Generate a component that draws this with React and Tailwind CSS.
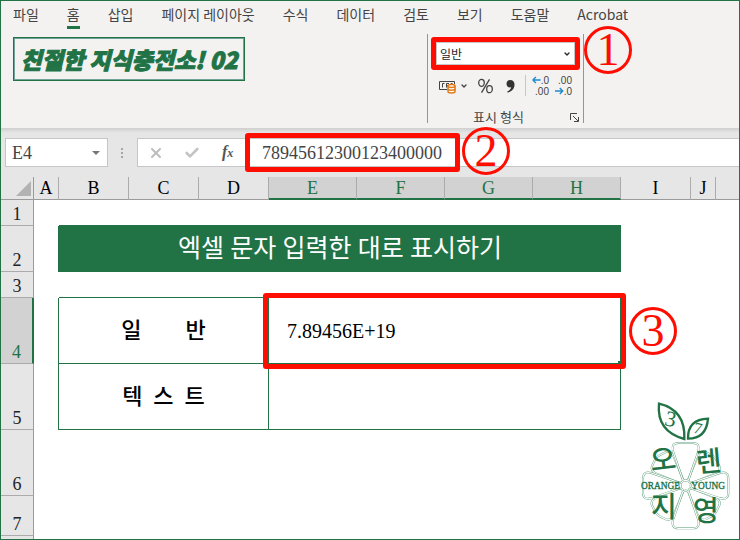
import React from 'react';
import { Check, ChevronDown, X } from 'lucide-react';

const tabs = ['파일', '홈', '삽입', '페이지 레이아웃', '수식', '데이터', '검토', '보기', '도움말', 'Acrobat'];

const columns = [
    { name: 'A' },
    { name: 'B' },
    { name: 'C' },
    { name: 'D' },
    { name: 'E', active: true },
    { name: 'F', active: true },
    { name: 'G', active: true },
    { name: 'H', active: true },
    { name: 'I' },
    { name: 'J' },
];

function Frame({ className }) {
    return <div className={`pointer-events-none absolute rounded-[3px] border-5 border-[#ff0d00] ${className}`} />;
}

function Marker({ number, className }) {
    return (
        <div
            className={`absolute z-10 flex size-12 items-center justify-center rounded-full border-3 border-[#ff0d00] font-['Liberation_Serif',serif] text-[46px] leading-none text-[#ff0d00] ${className}`}
        >
            {number}
        </div>
    );
}

function Tabs() {
    return (
        <nav className="flex h-7 gap-7 pl-3 text-sm text-[#444444]">
            {tabs.map((tab) => (
                <a
                    key={tab}
                    href="#"
                    className={`flex items-center whitespace-nowrap border-b-3 ${tab === '홈' ? 'border-[#217346]' : 'border-transparent'}`}
                >
                    {tab}
                </a>
            ))}
        </nav>
    );
}

function CurrencyIcon() {
    return (
        <svg width="17" height="16" viewBox="0 0 17 16" fill="none">
            <path d="M8 11.5H.5v-8h15V6" stroke="#444" />
            <path d="M5.500 5.500h-2v4M7.500 9.500v-4H10M7.500 7.500H9M12 7.500v-2h1.500" stroke="#444" />
            <path d="M9 8v5.500c0 2 7 2 7 0V8" fill="#fff" stroke="#e07b1a" strokeWidth="1.500" />
            <ellipse cx="12.500" cy="8" rx="3.500" ry="1.500" fill="#fff" stroke="#e07b1a" strokeWidth="1.500" />
            <path d="M9 10.800c0 2 7 2 7 0" stroke="#e07b1a" strokeWidth="1.500" />
        </svg>
    );
}

function DecimalArrow({ d }) {
    return (
        <svg width="9" height="8" viewBox="0 0 9 8" fill="none" stroke="#1e8bcd" strokeWidth="1.500">
            <path d={d} />
        </svg>
    );
}

function DecimalIcon({ increase }) {
    return (
        <span className="flex w-[17px] flex-col font-['Liberation_Sans',sans-serif] text-[10px] leading-[11px] text-[#444444]">
            <span className="flex items-center justify-between">
                {increase && <DecimalArrow d="M9 4H1M4 1L1 4l3 3" />}
                <span className="ml-auto">{increase ? '.0' : '.00'}</span>
            </span>
            <span className="flex items-center justify-between">
                {!increase && <DecimalArrow d="M0 4h8M5 1l3 3-3 3" />}
                <span className="ml-auto">{increase ? '.00' : '.0'}</span>
            </span>
        </span>
    );
}

function NumberGroup() {
    return (
        <section className="ml-[182px] flex h-[89px] w-[157px] flex-col border-x border-[#979593] px-2 pt-2">
            <div className="relative">
                <select
                    aria-label="표시 형식"
                    className="block h-[23px] w-full appearance-none border border-[#c8c6c4] bg-white pl-[3px] text-xs text-[#262626]"
                >
                    <option>일반</option>
                </select>
                <ChevronDown className="pointer-events-none absolute right-1 top-2 size-2 text-[#262626]" strokeWidth={4} />
                <Frame className="-inset-[5px]" />
                <Marker number="1" className="-top-4 left-[148px]" />
            </div>
            <div className="mt-[10px] flex h-[21px] items-center">
                <button aria-label="회계 표시 형식" className="ml-[3px] flex items-center gap-1">
                    <CurrencyIcon />
                    <ChevronDown className="size-2 text-[#444444]" strokeWidth={4} />
                </button>
                <button aria-label="백분율" className="ml-[9px]">
                    <svg width="17" height="16" viewBox="0 0 17 16" fill="none" stroke="#444" strokeWidth="1.300">
                        <ellipse cx="4.500" cy="4.800" rx="2.800" ry="3.500" />
                        <ellipse cx="12.500" cy="11.200" rx="2.800" ry="3.500" />
                        <path d="M12.500 1.300L4.500 14.700" />
                    </svg>
                </button>
                <button aria-label="쉼표" className="ml-3">
                    <svg width="9" height="14" viewBox="0 0 9 14" fill="#333">
                        <path d="M4 1c3 0 4.500 2 4.500 4.500 0 4-2.500 7-7 8l-.3-1c2.500-1 3.800-2.500 4-4.200C2.500 9 .5 7.200.5 4.700.5 2.500 2 1 4 1z" />
                    </svg>
                </button>
                <div className="ml-[10px] h-full border-l border-[#c8c6c4]" />
                <button aria-label="자릿수 늘림" className="ml-[6px]">
                    <DecimalIcon increase />
                </button>
                <button aria-label="자릿수 줄임" className="ml-[6px]">
                    <DecimalIcon />
                </button>
            </div>
            <div className="relative mt-auto text-center text-[13px] leading-3 text-[#444444]">
                <span className="pr-[14px]">표시 형식</span>
                <button aria-label="표시 형식 설정" className="absolute -right-1 top-[2px]">
                    <svg width="9" height="9" viewBox="0 0 9 9" fill="none" stroke="#444">
                        <path d="M.5 7V.5H7M3 3l5 5M8.500 4v4.500H4" />
                    </svg>
                </button>
            </div>
        </section>
    );
}

function Ribbon() {
    return (
        <header className="h-[127px] bg-[#f3f2f1]">
            <Tabs />
            <div className="flex items-start pl-3 pt-[5px]">
                <h1 className="mt-[3px] flex h-[44px] w-[232px] shrink-0 items-center justify-center whitespace-nowrap border border-[#217346] text-[23px] font-black italic text-[#217346] outline-1 -outline-offset-2 outline-[#6fa39a] [-webkit-text-stroke:1px_#217346]">
                    친절한 지식충전소! 02
                </h1>
                <NumberGroup />
            </div>
        </header>
    );
}

function FormulaBar() {
    return (
        <div className="flex bg-linear-to-b from-[#cfcfcf] to-[#e6e6e6] to-10% py-[10px] pl-1 font-['Liberation_Serif',serif] text-lg text-[#444444]">
            <div className="flex h-[29px] w-[103px] items-center border border-[#c6c6c6] bg-white">
                <input aria-label="이름 상자" className="w-20 pl-[6px] outline-none" defaultValue="E4" />
                <button aria-label="이름 목록" className="ml-[6px] border-x-4 border-t-4 border-x-transparent border-t-[#777777]" />
            </div>
            <div className="ml-[13px] flex flex-col justify-center gap-[2px]">
                <span className="size-[2px] bg-[#a6a6a6]" />
                <span className="size-[2px] bg-[#a6a6a6]" />
                <span className="size-[2px] bg-[#a6a6a6]" />
            </div>
            <div className="ml-[14px] flex h-[29px] flex-1 items-center border border-r-0 border-[#c6c6c6] bg-white">
                <button aria-label="취소" className="ml-[10px] text-[#bdbdbd]">
                    <X className="size-4" strokeWidth={3} />
                </button>
                <button aria-label="입력" className="ml-5 text-[#c4c4c4]">
                    <Check className="size-4" strokeWidth={4} />
                </button>
                <button aria-label="함수 삽입" className="ml-[22px] w-4 text-left text-base font-bold italic leading-none text-[#555555]">
                    f<span className="text-xs">x</span>
                </button>
                <div className="relative ml-3 flex h-full w-[205px] items-center">
                    <input aria-label="수식 입력줄" className="w-full pl-3 outline-none" defaultValue="78945612300123400000" />
                    <Frame className="-inset-x-[5px] -inset-y-[6px]" />
                    <Marker number="2" className="-top-3 left-[212px]" />
                </div>
            </div>
        </div>
    );
}

function RowHeader({ number, active }) {
    return (
        <th
            scope="row"
            className={`border-b border-b-[#ababab] p-0 pb-px align-bottom text-lg leading-5 font-normal ${active ? 'border-r-2 border-r-[#217346] bg-[#d2d2d2] text-[#217346]' : 'border-r border-r-[#9b9b9b] bg-[#e6e6e6] text-[#222222]'}`}
        >
            {number}
        </th>
    );
}

function Sheet() {
    return (
        <table className="w-full table-fixed border-separate border-spacing-0 font-['Liberation_Serif','Noto_Sans_CJK_KR',serif]">
            <colgroup>
                <col className="w-[33px]" />
                <col className="w-[25px]" />
                <col className="w-[70px]" />
                <col className="w-[70px]" />
                <col className="w-[70px]" />
                <col className="w-[88px]" />
                <col className="w-[88px]" />
                <col className="w-[88px]" />
                <col className="w-[88px]" />
                <col className="w-[70px]" />
                <col className="w-[25px]" />
                <col />
            </colgroup>
            <thead>
                <tr className="h-[23px] bg-[#e6e6e6] text-lg leading-5">
                    <td className="border-b border-r border-[#9b9b9b] p-0">
                        <svg width="15" height="15" viewBox="0 0 15 15" className="ml-auto mr-[2px]">
                            <path d="M15 0v15H0z" fill="#b2b2b2" />
                        </svg>
                    </td>
                    {columns.map((column) => (
                        <th
                            key={column.name}
                            scope="col"
                            className={`border-r border-r-[#ababab] p-0 font-normal ${column.active ? 'border-b-2 border-b-[#217346] bg-[#d2d2d2] text-[#217346]' : 'border-b border-b-[#9b9b9b] text-black'}`}
                        >
                            {column.name}
                        </th>
                    ))}
                    <td className="border-b border-[#9b9b9b] p-0" />
                </tr>
            </thead>
            <tbody>
                <tr className="h-[26px]">
                    <RowHeader number="1" />
                    <td />
                    <td colSpan={7} className="border-b border-[#217346]" />
                </tr>
                <tr className="h-[46px]">
                    <RowHeader number="2" />
                    <td className="border-r border-[#217346]" />
                    <td colSpan={7} className="bg-[#217346] p-0 text-center text-[25px] leading-8 text-white">
                        엑셀 문자 입력한 대로 표시하기
                    </td>
                </tr>
                <tr className="h-[26px]">
                    <RowHeader number="3" />
                    <td />
                    <td colSpan={7} className="border-b border-[#217346]" />
                </tr>
                <tr className="h-[66px]">
                    <RowHeader number="4" active />
                    <td className="border-r border-[#217346]" />
                    <td colSpan={3} className="whitespace-pre border-b border-r border-[#217346] p-0 text-center text-[22px] font-medium">
                        {'일        반'}
                    </td>
                    <td colSpan={4} className="relative border-b border-r border-[#217346] p-0 pl-[18px] text-xl text-black">
                        7.89456E+19
                        <span className="absolute -bottom-px -right-px size-[3px] bg-[#217346]" />
                        <Frame className="-bottom-[6px] -left-[6px] -right-[6px] -top-[5px]" />
                        <Marker number="3" className="left-[360px] top-[9px]" />
                    </td>
                </tr>
                <tr className="h-[66px]">
                    <RowHeader number="5" />
                    <td className="border-r border-[#217346]" />
                    <td colSpan={3} className="whitespace-pre border-b border-r border-[#217346] p-0 text-center text-[22px] font-medium">
                        {'텍  스  트'}
                    </td>
                    <td colSpan={4} className="border-b border-r border-[#217346]" />
                </tr>
                <tr className="h-[66px]">
                    <RowHeader number="6" />
                </tr>
                <tr className="h-10">
                    <RowHeader number="7" />
                </tr>
                <tr className="h-[3px]">
                    <td className="border-r border-[#9b9b9b] bg-[#e6e6e6] p-0" />
                </tr>
            </tbody>
        </table>
    );
}

const widePetal = 'M191 256L162 172Q156 147 178 147H222Q244 147 238 172L209 256Q200 264 191 256Z';
const slimPetal = 'M192 256L163 186Q157 168 170 162L190 155Q200 152 210 155L230 162Q243 168 237 186L208 256Q200 264 192 256Z';

function Logo() {
    return (
        <svg
            width="120"
            height="145"
            viewBox="0 0 360 435"
            className="absolute bottom-0 right-0 font-['Liberation_Serif','Noto_Sans_CJK_KR',serif]"
            fill="#217346"
        >
            {[45, 135, 225, 315, 0, 90, 180, 270].map((angle) => (
                <g key={angle} transform={`rotate(${angle} 200 275)`} fill="none">
                    <path d={angle % 90 ? slimPetal : widePetal} stroke="#5f9f7c" strokeWidth="6" />
                    <path d={angle % 90 ? slimPetal : widePetal} stroke="#fff" strokeWidth="3.500" />
                </g>
            ))}
            <g fill="none" stroke="#217346" strokeWidth="7">
                <path d="M120 29Q200 48 196 135Q112 112 120 29Z" />
                <path d="M267 74Q206 76 207 134Q262 134 267 74Z" />
            </g>
            <text x="155" y="97" fontSize="66" textAnchor="middle" transform="rotate(12 155 75)">3</text>
            <text x="237" y="119" fontSize="48" textAnchor="middle" transform="rotate(14 237 103)">7</text>
            <g fontSize="84" fontWeight="500" textAnchor="middle">
                <text x="132" y="227" transform="rotate(-7 132 195)">오</text>
                <text x="269" y="232" transform="rotate(-5 269 200)">렌</text>
                <text x="135" y="370">지</text>
                <text x="261" y="381">영</text>
            </g>
            <g fontSize="28" stroke="#217346" strokeWidth="1">
                <text x="66" y="284">ORANGE</text>
                <text x="217" y="284">YOUNG</text>
            </g>
        </svg>
    );
}

export default function App() {
    return (
        <div className="flex min-h-screen w-full flex-col overflow-hidden border border-[#217346] bg-white font-['Noto_Sans_CJK_KR',sans-serif]">
            <Ribbon />
            <FormulaBar />
            <main className="relative flex-1">
                <Sheet />
                <Logo />
            </main>
        </div>
    );
}
